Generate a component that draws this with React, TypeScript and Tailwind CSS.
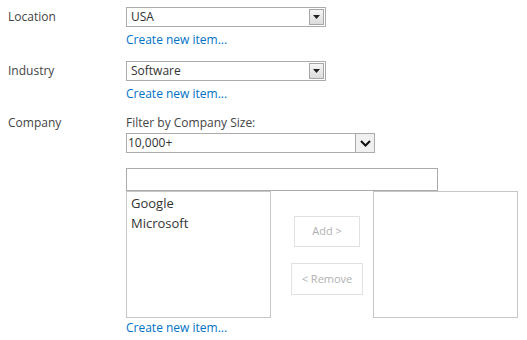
const font = { fontFamily: '"Open Sans", "Noto Sans", sans-serif' }

const Link = () => (
  <div className="text-[12px] leading-[18px] text-[#0072c6]">Create new item...</div>
)

const Dropdown = ({ value }: { value: string }) => (
  <div className="flex h-[20px] w-[200px] items-center border border-[#ababab] bg-white">
    <span className="flex-1 pl-[4px] text-[12px] leading-[18px] text-[#333]">{value}</span>
    <div className="mr-[1px] flex h-[16px] w-[15px] items-center justify-center border border-[#a6a6a6] bg-gradient-to-b from-[#f6f6f6] to-[#dcdcdc]">
      <svg width="7" height="4" viewBox="0 0 7 4">
        <path d="M0 0h7L3.5 4z" fill="#222" />
      </svg>
    </div>
  </div>
)

export default function App() {
  return (
    <div className="h-[340px] w-[527px] bg-white text-[#444]" style={font}>
      <div className="grid grid-cols-[126px_1fr] pt-[7px] text-[12px]">
        {/* Location */}
        <div className="pl-[8px] leading-[20px]">Location</div>
        <div>
          <Dropdown value="USA" />
          <div className="mt-[4px]">
            <Link />
          </div>
        </div>

        {/* Industry */}
        <div className="mt-[12px] pl-[8px] leading-[20px]">Industry</div>
        <div className="mt-[12px]">
          <Dropdown value="Software" />
          <div className="mt-[4px]">
            <Link />
          </div>
        </div>

        {/* Company */}
        <div className="mt-[12px] pl-[8px] leading-[16px]">Company</div>
        <div className="mt-[12px]">
          <div className="text-[12px] leading-[16px] text-[#444]">Filter by Company Size:</div>
          <div className="mt-[2px] flex h-[20px] w-[249px] items-center border border-[#ababab] bg-white">
            <span className="flex-1 pl-[1px] text-[12px] leading-[18px] text-[#333]">10,000+</span>
            <div className="flex h-[18px] w-[19px] items-center justify-center border-l border-[#ababab] bg-[#f0f0f0]">
              <svg width="11" height="7" viewBox="0 0 11 7">
                <path d="M1 1l4.5 4.5L10 1" fill="none" stroke="#111" strokeWidth="2" />
              </svg>
            </div>
          </div>

          <div className="mt-[15px] h-[23px] w-[312px] border border-[#ababab] bg-white" />

          <div className="flex items-start">
            <div className="h-[127px] w-[145px] border border-[#c6c6c6] pl-[4px] pt-[1px] text-[13px] leading-[20px] text-[#333]">
              <div>Google</div>
              <div>Microsoft</div>
            </div>
            <div className="flex w-[102px] flex-col items-center pl-[10px] pt-[25px]">
              <div className="flex h-[31px] w-[66px] items-center justify-center border border-[#e1e1e1] text-[11px] text-[#b1b1b1]">
                Add &gt;
              </div>
              <div className="mt-[16px] flex h-[32px] w-[72px] items-center justify-center border border-[#e1e1e1] text-[11px] text-[#b1b1b1]">
                &lt; Remove
              </div>
            </div>
            <div className="h-[127px] w-[145px] border border-[#c6c6c6]" />
          </div>
          <div className="mt-[1px]">
            <Link />
          </div>
        </div>
      </div>
    </div>
  )
}
